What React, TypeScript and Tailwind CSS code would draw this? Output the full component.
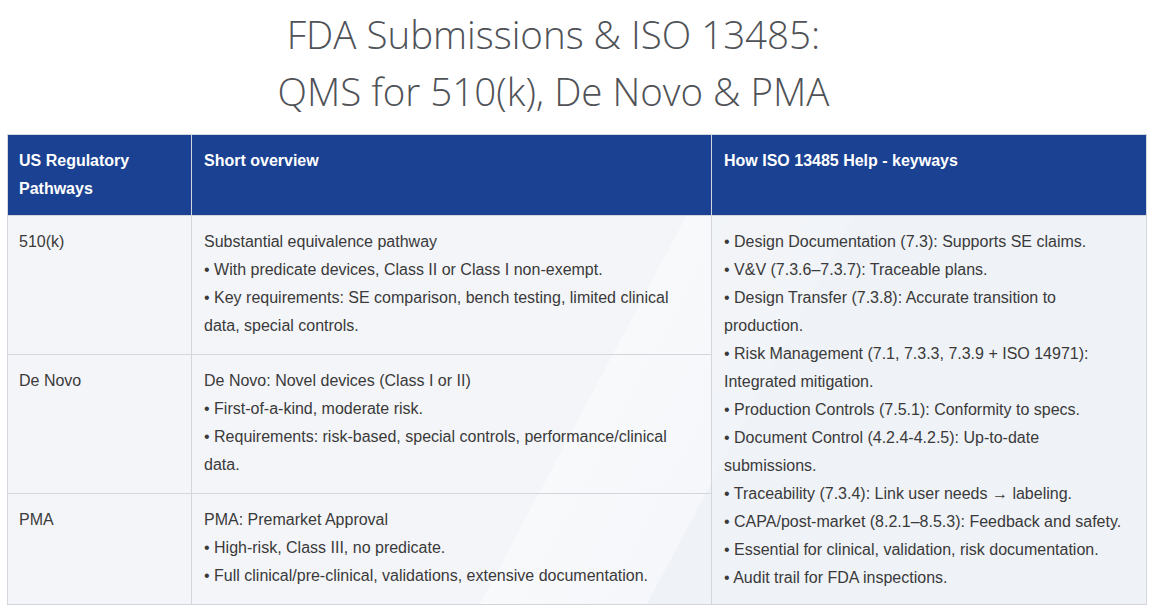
const rows = [
  {
    path: '510(k)',
    lines: [
      'Substantial equivalence pathway',
      '• With predicate devices, Class II or Class I non-exempt.',
      '• Key requirements: SE comparison, bench testing, limited clinical data, special controls.',
    ],
    h: 'h-[139px]',
  },
  {
    path: 'De Novo',
    lines: [
      'De Novo: Novel devices (Class I or II)',
      '• First-of-a-kind, moderate risk.',
      '• Requirements: risk-based, special controls, performance/clinical data.',
    ],
    h: 'h-[139px]',
  },
  {
    path: 'PMA',
    lines: [
      'PMA: Premarket Approval',
      '• High-risk, Class III, no predicate.',
      '• Full clinical/pre-clinical, validations, extensive documentation.',
    ],
    h: 'h-[111px]',
  },
];

const keyways = [
  '• Design Documentation (7.3): Supports SE claims.',
  '• V&V (7.3.6–7.3.7): Traceable plans.',
  '• Design Transfer (7.3.8): Accurate transition to production.',
  '• Risk Management (7.1, 7.3.3, 7.3.9 + ISO 14971): Integrated mitigation.',
  '• Production Controls (7.5.1): Conformity to specs.',
  '• Document Control (4.2.4-4.2.5): Up-to-date submissions.',
  '• Traceability (7.3.4): Link user needs → labeling.',
  '• CAPA/post-market (8.2.1–8.5.3): Feedback and safety.',
  '• Essential for clinical, validation, risk documentation.',
  '• Audit trail for FDA inspections.',
];

export default function App() {
  return (
    <div className="w-[1153px] h-[614px] bg-white overflow-hidden">
      <h1 className="pt-[6px] pr-[46px] text-center font-['Open_Sans',sans-serif] font-light text-[38.5px] leading-[57px] text-[#4f5257]">
        FDA Submissions &amp; ISO 13485:
        <br />
        QMS for 510(k), De Novo &amp; PMA
      </h1>

      <div className="mt-[14px] ml-[7px] w-[1140px] bg-[linear-gradient(118deg,#f4f5f9_0%,#f4f5f9_52%,#f8f9fb_52%,#f6f7fa_64%,#eff2f7_64%,#eff2f7_100%)]">
        <table className="table-fixed w-[1140px] font-['Liberation_Sans',Arial,sans-serif] text-[16px] leading-[28px] text-[#3a3a3a]">
          <thead>
            <tr className="h-[81px] bg-[#1a4192] text-white font-bold">
              <th className="w-[184px] border border-[#d3d6dc] pl-[11px] pr-3 py-3 text-left align-top">
                US Regulatory Pathways
              </th>
              <th className="w-[520px] border border-[#d3d6dc] pl-[12px] pr-3 py-3 text-left align-top">
                Short overview
              </th>
              <th className="w-[435px] border border-[#d3d6dc] pl-[12px] pr-3 py-3 text-left align-top">
                How ISO 13485 Help - keyways
              </th>
            </tr>
          </thead>
          <tbody>
            {rows.map((r, i) => (
              <tr key={r.path} className={r.h}>
                <td className="border border-[#d3d6dc] pl-[11px] pr-3 py-3 align-top">{r.path}</td>
                <td className="border border-[#d3d6dc] pl-[12px] pr-3 py-3 align-top">
                  {r.lines.map((l) => (
                    <div key={l}>{l}</div>
                  ))}
                </td>
                {i === 0 && (
                  <td rowSpan={3} className="border border-[#d3d6dc] pl-[12px] pr-3 py-3 align-top bg-[#eff2f7]/60">
                    {keyways.map((k) => (
                      <div key={k}>{k}</div>
                    ))}
                  </td>
                )}
              </tr>
            ))}
          </tbody>
        </table>
      </div>
    </div>
  );
}
